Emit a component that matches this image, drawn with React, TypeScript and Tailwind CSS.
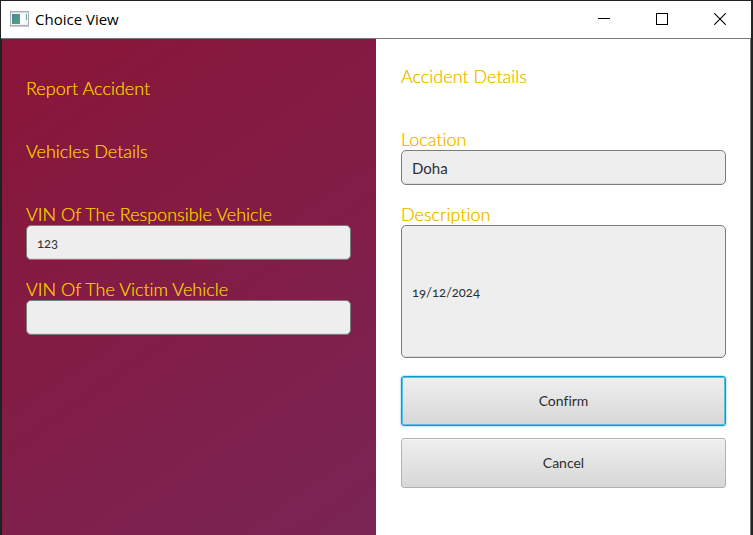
import { useState } from "react";

type FieldProps = {
  id: string;
  label: string;
  initial?: string;
  size?: string;
};

const heading = "text-[18px] leading-[22px] font-light text-[#f0c000] [text-shadow:0_0_0_#f0c000]";

function Field({ id, label, initial = "", size = "h-[35px] text-[13px]" }: FieldProps) {
  const [value, setValue] = useState(initial);
  return (
    <div className="flex flex-col">
      <label htmlFor={id} className={heading}>
        {label}
      </label>
      <input
        id={id}
        type="text"
        value={value}
        onChange={(e) => setValue(e.target.value)}
        className={`w-full rounded-[5px] border border-[#7c7c7c] bg-[#eeeeee] px-2.5 text-[#2e2e36] shadow-[inset_0_-1px_0_#dcdcdc] outline-none ${size}`}
      />
    </div>
  );
}

function WindowIcon() {
  return (
    <svg width="19" height="16" viewBox="0 0 19 16" aria-hidden="true">
      <defs>
        <linearGradient id="pane" x1="0" y1="0" x2="1" y2="1">
          <stop offset="0" stopColor="#4a7fa0" />
          <stop offset="1" stopColor="#57a878" />
        </linearGradient>
      </defs>
      <rect x="0.5" y="0.5" width="18" height="14" fill="#f2f4f5" stroke="#a9afb4" />
      <rect x="1" y="1" width="17" height="1" fill="#d3d8dc" />
      <rect x="2" y="3" width="8" height="10" fill="url(#pane)" />
      <rect x="11" y="3" width="4" height="10" fill="#fbfbfb" />
      <rect x="16" y="3" width="1" height="6" fill="#6aa7a0" />
      <rect x="0" y="15" width="19" height="1" fill="#c9cdd0" />
    </svg>
  );
}

const captionButton = "flex h-full w-[58px] items-center justify-center hover:bg-gray-200";

function TitleBar() {
  return (
    <header className="flex h-[38px] items-center border-b border-[#777777] bg-white pr-0.5 pb-px pl-[9px]">
      <WindowIcon />
      <h1 className="ml-1.5 flex-1 font-['Open_Sans',sans-serif] text-[15px] text-black">Choice View</h1>
      <div className="flex h-full">
        <button type="button" aria-label="Minimize" className={captionButton}>
          <svg width="12" height="12" viewBox="0 0 12 12" shapeRendering="crispEdges">
            <rect y="5" width="12" height="1" />
          </svg>
        </button>
        <button type="button" aria-label="Maximize" className={captionButton}>
          <svg width="12" height="12" viewBox="0 0 12 12" fill="none" stroke="#000">
            <rect x="0.5" y="0.5" width="11" height="11" />
          </svg>
        </button>
        <button type="button" aria-label="Close" className={captionButton}>
          <svg width="12" height="12" viewBox="0 0 12 12" stroke="#000" strokeWidth="1.1">
            <path d="M0.3 0.3 11.7 11.7M11.7 0.3 0.3 11.7" />
          </svg>
        </button>
      </div>
    </header>
  );
}

const actionButton =
  "h-[50px] w-full rounded-[3px] border bg-linear-to-b from-[#efefef] to-[#d7d7d7] pb-0.5 text-[14px] text-[#2e2e2e]";

export default function App() {
  return (
    <div className="flex min-h-screen flex-col border-t border-r-2 border-l border-[#222222] bg-white font-[Lato,sans-serif] [font-variant-ligatures:none] [font-variant-numeric:oldstyle-nums]">
      <TitleBar />
      <main className="grid flex-1 grid-cols-2">
        <section className="flex flex-col border-l border-[#3a1020] bg-[linear-gradient(145deg,#8a1538,#782657_108%)] pt-[38px] pr-[25px] pl-6">
          <h2 className={heading}>Report Accident</h2>
          <h2 className={`mt-[41px] ${heading}`}>Vehicles Details</h2>
          <div className="mt-[41px] flex flex-col gap-[18px]">
            <Field id="responsible" label="VIN Of The Responsible Vehicle" initial="123" />
            <Field id="victim" label="VIN Of The Victim Vehicle" />
          </div>
        </section>
        <section className="flex flex-col border-r border-[#777777] bg-white pt-[26px] pr-6 pl-[25px]">
          <h2 className={heading}>Accident Details</h2>
          <div className="mt-[41px] flex flex-col gap-[18px]">
            <Field id="location" label="Location" initial="Doha" size="h-[35px] text-[15px]" />
            <Field id="description" label="Description" initial="19/12/2024" size="h-[133px] text-[13px]" />
          </div>
          <div className="mt-[18px] flex flex-col gap-3">
            <button
              type="button"
              className={`${actionButton} border-[#0f9ccb] shadow-[0_0_2px_#3cb4de,inset_0_0_0_1px_#5cbfe0]`}
            >
              Confirm
            </button>
            <button
              type="button"
              className={`${actionButton} border-[#b2b2b2] shadow-[inset_0_1px_0_#f8f8f8]`}
            >
              Cancel
            </button>
          </div>
        </section>
      </main>
    </div>
  );
}
